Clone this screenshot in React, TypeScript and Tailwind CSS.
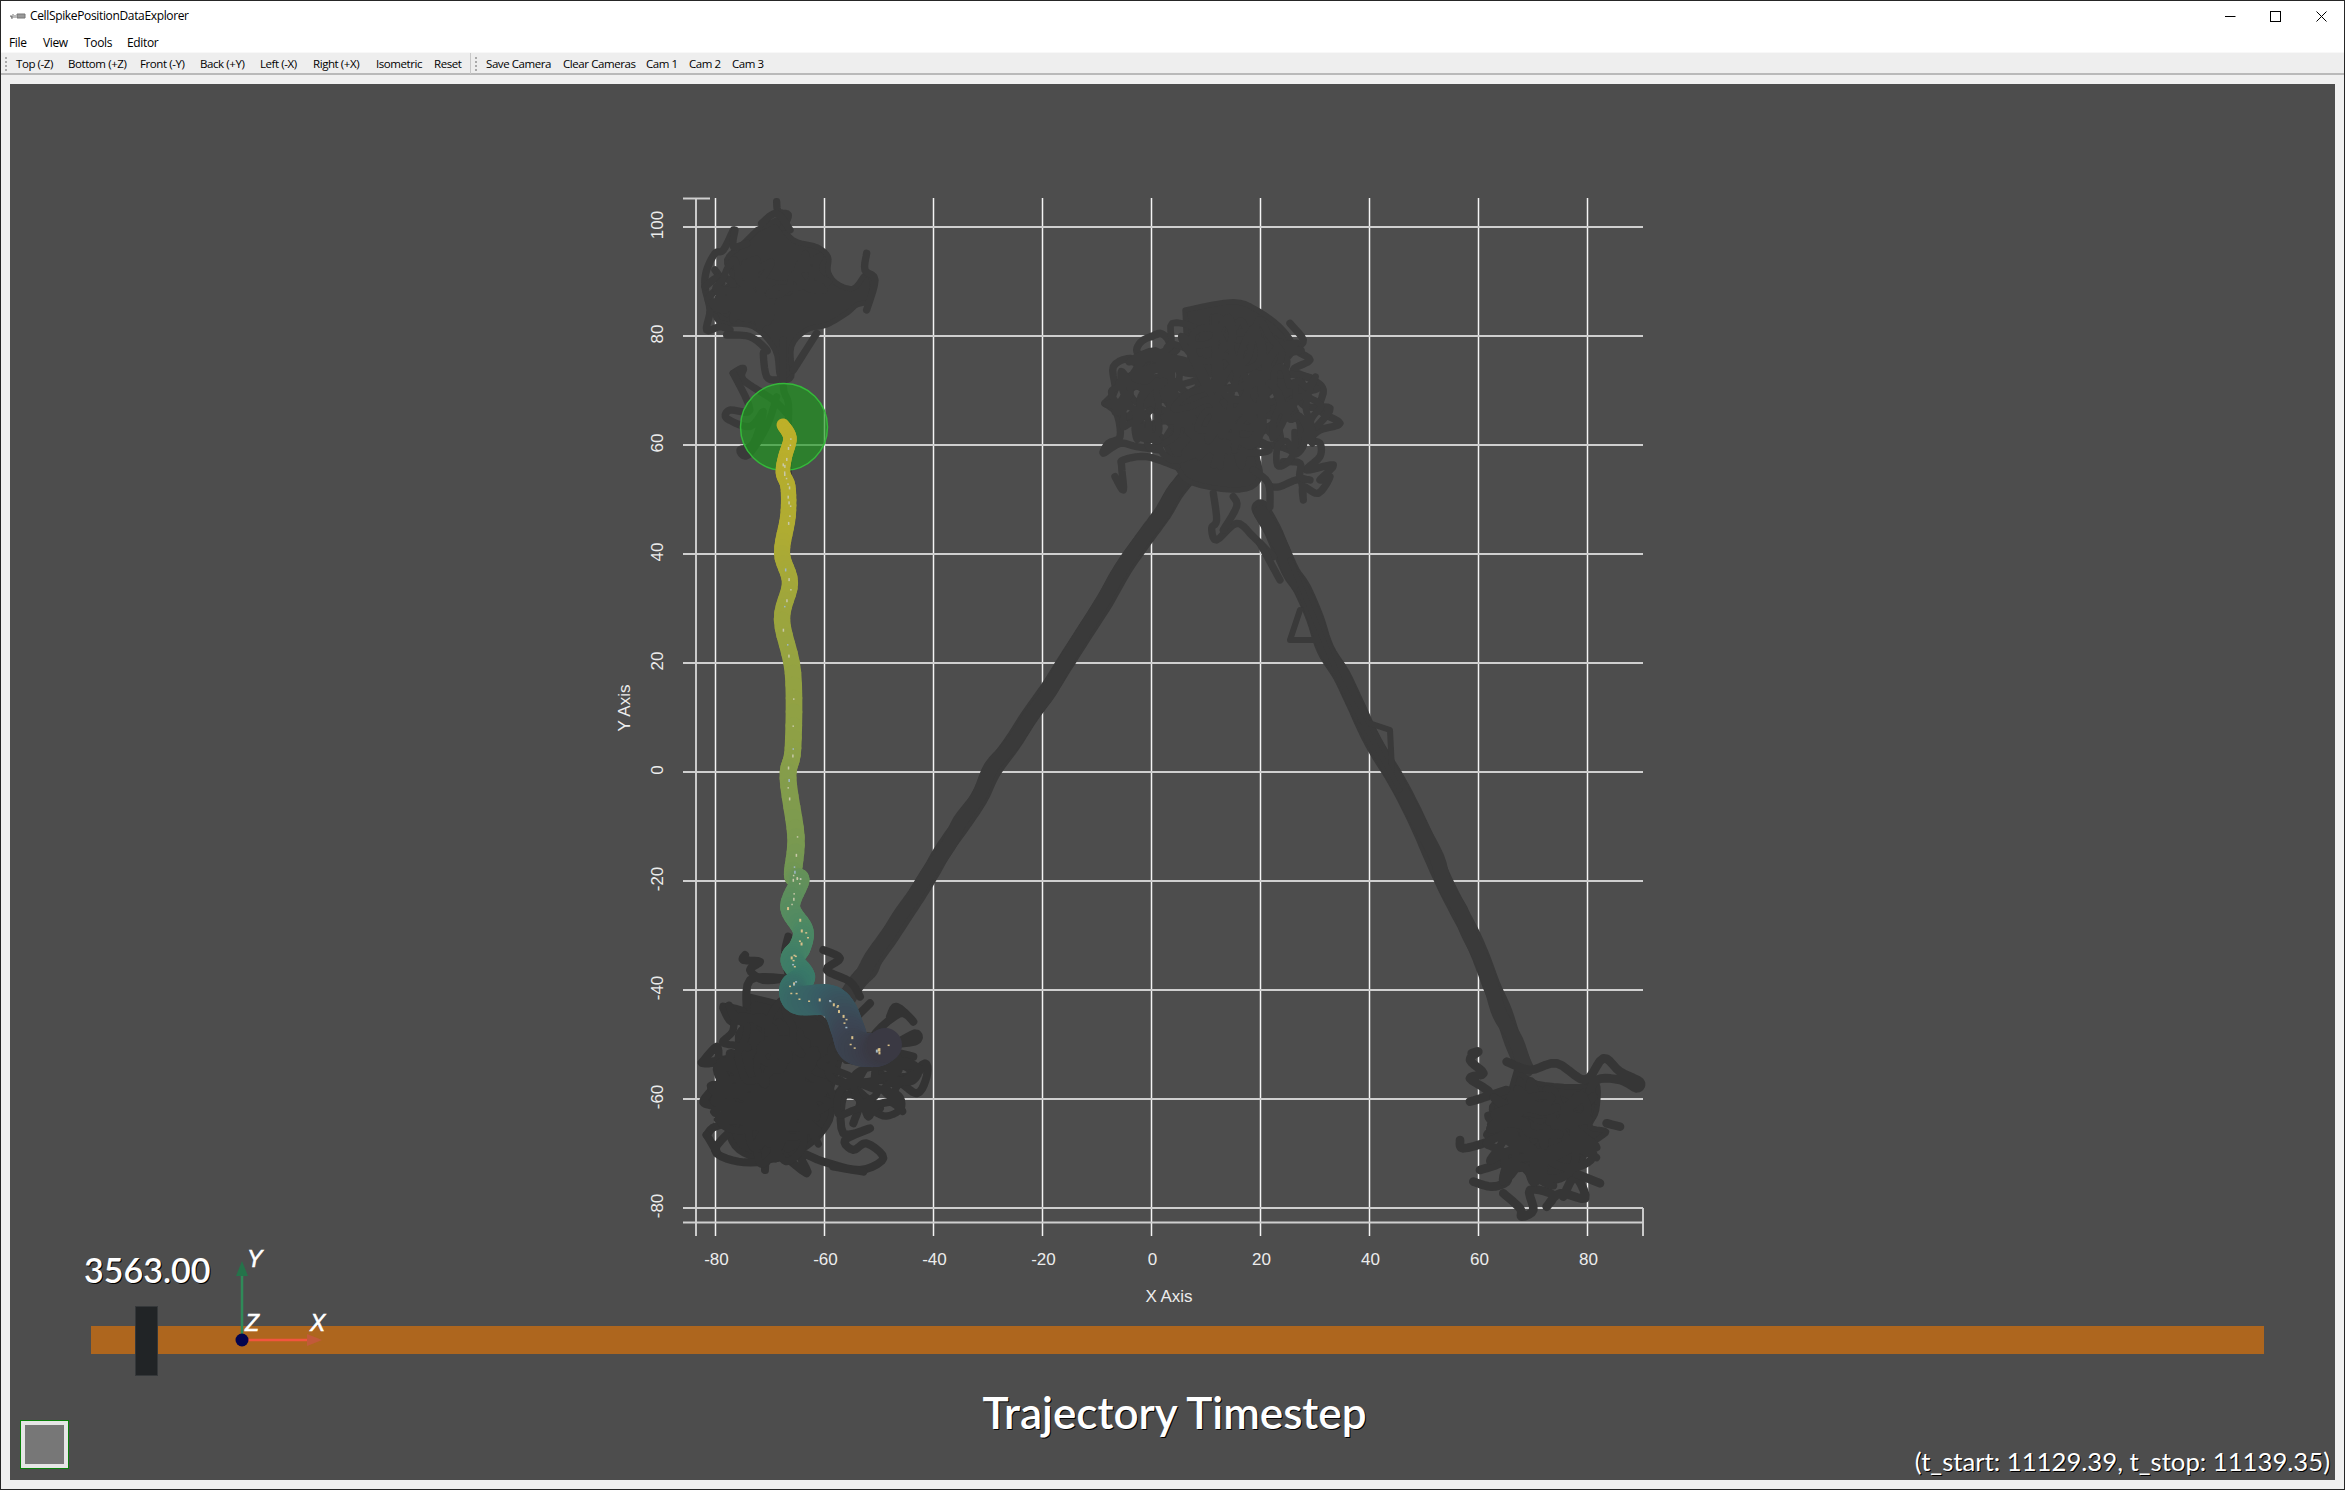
import React from "react";

type Pt = [number, number];

const ui = "font-['Open_Sans','Noto_Sans',sans-serif]";

const rng = (seed: number) => () => {
  seed = (seed + 0x6d2b79f5) | 0;
  let t = Math.imul(seed ^ (seed >>> 15), 1 | seed);
  t = (t + Math.imul(t ^ (t >>> 7), 61 | t)) ^ t;
  return ((t ^ (t >>> 14)) >>> 0) / 4294967296;
};

// catmull-rom resample so the tracks don't look like straight sticks
const smooth = (p: Pt[], n = 5): Pt[] => {
  const out: Pt[] = [];
  for (let i = 0; i < p.length - 1; i++) {
    const a = p[Math.max(i - 1, 0)];
    const b = p[i];
    const c = p[i + 1];
    const d = p[Math.min(i + 2, p.length - 1)];
    for (let j = 0; j < n; j++) {
      const t = j / n;
      const f = (k: 0 | 1) =>
        0.5 * (2 * b[k] + (c[k] - a[k]) * t + (2 * a[k] - 5 * b[k] + 4 * c[k] - d[k]) * t * t + (3 * b[k] - a[k] - 3 * c[k] + d[k]) * t * t * t);
      out.push([f(0), f(1)]);
    }
  }
  out.push(p[p.length - 1]);
  return out;
};

const line = (p: Pt[]) => p.map((q, i) => `${i ? "L" : "M"}${q[0].toFixed(1)} ${q[1].toFixed(1)}`).join("");
const curve = (p: Pt[]) => line(smooth(p));

// random walk held inside an ellipse, in the zoom coords of each blob
const scribble = (seed: number, cx: number, cy: number, rx: number, ry: number, n: number): Pt[] => {
  const r = rng(seed);
  const out: Pt[] = [];
  let x = cx;
  let y = cy;
  let a = r() * 6.28;
  for (let i = 0; i < n; i++) {
    a += (r() - 0.5) * 2.6;
    let nx = x + Math.cos(a) * rx * 0.3;
    let ny = y + Math.sin(a) * ry * 0.3;
    if (((nx - cx) / rx) ** 2 + ((ny - cy) / ry) ** 2 > 1) {
      a = Math.atan2(cy - y, cx - x) + (r() - 0.5) * 1.4;
      nx = x + Math.cos(a) * rx * 0.3;
      ny = y + Math.sin(a) * ry * 0.3;
    }
    x = nx;
    y = ny;
    out.push([x, y]);
  }
  return out;
};

const jitter = (p: Pt[], seed: number, amt: number, n = 4): Pt[] => {
  const r = rng(seed);
  const out: Pt[] = [];
  for (let i = 0; i < p.length - 1; i++) {
    for (let j = 0; j < n; j++) {
      const t = j / n;
      out.push([p[i][0] + (p[i + 1][0] - p[i][0]) * t + (r() - 0.5) * amt, p[i][1] + (p[i + 1][1] - p[i][1]) * t + (r() - 0.5) * amt]);
    }
  }
  out.push(p[p.length - 1]);
  return out;
};

const blobA = {
  core: [[470, 120], [520, 180], [590, 200], [625, 230], [625, 275], [650, 310], [700, 325], [735, 285], [755, 300], [750, 360], [710, 375], [680, 400], [620, 435], [560, 450], [515, 500], [515, 590], [480, 590], [465, 510], [400, 440], [310, 430], [285, 400], [300, 340], [340, 300], [320, 240], [370, 190], [410, 150]] as Pt[],
  loops: [
    [[470, 65], [475, 95], [505, 105], [490, 140]],
    [[425, 130], [470, 100], [510, 150]],
    [[740, 220], [735, 270], [765, 300], [740, 390]],
    [[340, 150], [310, 210], [285, 220], [260, 270], [255, 320], [270, 390], [260, 450], [300, 440], [330, 450]],
    [[345, 150], [340, 200], [380, 190]],
    [[285, 270], [305, 310], [265, 360], [320, 400]],
    [[255, 320], [300, 290], [340, 320], [290, 390]],
    [[320, 465], [390, 470], [440, 510], [430, 520], [440, 590], [470, 600]],
    [[520, 570], [590, 460]],
    [[340, 580], [370, 565], [370, 600], [460, 660], [500, 700]],
    [[340, 580], [390, 690], [330, 690], [320, 715], [390, 740], [430, 695], [400, 790], [360, 810], [385, 825], [440, 740], [470, 650]],
    [[490, 480], [490, 620], [505, 670], [505, 760], [505, 960]],
  ] as Pt[][],
};

const blobB = {
  core: [[270, 350], [420, 390], [500, 430], [540, 520], [510, 640], [510, 720], [440, 800], [330, 840], [235, 810], [200, 740], [190, 660], [195, 590], [240, 530], [250, 420]] as Pt[],
  loops: [
    [[255, 225], [250, 240], [300, 245], [270, 270], [310, 300], [370, 295], [270, 300], [260, 400]],
    [[190, 380], [250, 395], [215, 425], [190, 385]],
    [[125, 548], [170, 500], [170, 545], [125, 548], [220, 530], [260, 470]],
    [[155, 625], [150, 665], [185, 670], [190, 560]],
    [[140, 765], [165, 740], [230, 730], [165, 810], [235, 845], [320, 845]],
    [[140, 765], [170, 815]],
    [[315, 870], [330, 800], [440, 880], [420, 820], [490, 845], [600, 870], [670, 835], [620, 790], [580, 810], [555, 780], [630, 745], [550, 760], [550, 650], [600, 660], [580, 730]],
    [[520, 860], [610, 875]],
    [[490, 210], [540, 235], [500, 270], [570, 305], [600, 350]],
    [[385, 170], [375, 220], [385, 280]],
    [[630, 370], [590, 410]],
    [[540, 600], [660, 685], [590, 620], [700, 600], [770, 640], [800, 590], [795, 550], [740, 590], [660, 580], [690, 520], [760, 530], [650, 500], [765, 485], [765, 460], [690, 495], [640, 470], [720, 400], [760, 425], [710, 380], [690, 410]],
    [[620, 510], [760, 575], [700, 610]],
    [[520, 500], [640, 470], [660, 560]],
    [[480, 640], [495, 680], [550, 620]],
    [[160, 625], [130, 668], [190, 680]],
    [[540, 420], [590, 450], [620, 520], [560, 540]],
  ] as Pt[][],
};

const blobC = {
  core: [[290, 210], [350, 250], [480, 260], [530, 250], [530, 330], [510, 380], [560, 395], [520, 430], [470, 500], [420, 540], [350, 540], [300, 490], [290, 430], [240, 370], [215, 320], [270, 280]] as Pt[],
  loops: [
    [[155, 160], [175, 155], [150, 180], [190, 220], [150, 235], [210, 280], [150, 305], [260, 270]],
    [[260, 185], [330, 210], [410, 190], [495, 240], [550, 175], [600, 215], [660, 245], [650, 265], [600, 240], [530, 240], [500, 300]],
    [[120, 420], [130, 445], [215, 420], [205, 400], [290, 380]],
    [[180, 510], [240, 490], [290, 455], [340, 420]],
    [[160, 545], [215, 560], [260, 545], [270, 510], [330, 500]],
    [[250, 580], [300, 625], [305, 650], [340, 630], [330, 570], [400, 585], [380, 620], [420, 580], [495, 595], [465, 530], [430, 590]],
    [[465, 520], [540, 550]],
    [[500, 440], [520, 470]],
    [[560, 370], [600, 380]],
    [[290, 300], [360, 360], [400, 300], [480, 320], [520, 290]],
    [[230, 300], [300, 360], [280, 430]],
  ] as Pt[][],
};

const blobD = {
  core: [[315, 90], [460, 65], [540, 95], [610, 150], [640, 210], [580, 250], [400, 250], [320, 200]] as Pt[],
  core2: [[320, 370], [420, 350], [530, 380], [520, 480], [540, 590], [480, 630], [340, 610], [290, 560], [250, 480]] as Pt[],
  loops: [
    [[215, 170], [240, 160], [265, 180], [275, 230], [240, 260], [190, 235], [170, 210], [190, 180], [240, 160]],
    [[75, 370], [105, 330], [100, 260], [150, 235], [180, 260], [240, 250], [290, 210]],
    [[75, 370], [110, 400], [120, 470], [85, 490], [70, 520], [120, 490], [170, 500], [240, 510]],
    [[105, 590], [130, 630], [125, 560], [130, 540], [200, 530], [290, 560]],
    [[130, 300], [160, 360], [210, 380], [260, 420], [300, 460]],
    [[135, 340], [200, 300], [240, 340], [280, 390]],
    [[130, 300], [200, 280], [230, 360], [170, 420], [120, 400]],
    [[170, 420], [240, 470]],
    [[630, 130], [670, 180], [650, 210], [690, 240], [640, 270], [700, 300], [730, 330], [720, 390], [780, 430], [720, 450], [690, 480], [720, 490], [720, 530], [680, 570], [760, 555], [720, 600], [750, 590], [715, 640], [670, 620], [670, 660], [660, 600], [600, 620], [570, 620]],
    [[620, 350], [660, 430], [650, 510], [600, 500], [520, 490]],
    [[640, 340], [680, 380], [750, 385], [710, 440]],
    [[600, 280], [700, 300], [620, 370], [580, 430], [520, 470]],
    [[610, 545], [660, 550], [660, 590], [690, 600]],
    [[400, 640], [410, 720], [395, 745], [410, 780], [470, 730], [520, 770], [580, 830]],
    [[460, 650], [470, 680], [430, 750]],
    [[540, 790], [600, 900]],
    [[520, 570], [565, 610], [570, 680]],
  ] as Pt[][],
};

const legLeft: Pt[] = [[1185, 480], [1144, 538], [1065, 665], [994, 770], [930, 875], [875, 957], [845, 1002]];
const legRight: Pt[] = [[1262, 510], [1301, 591], [1353, 703], [1436, 860], [1480, 957], [1525, 1069]];

const tracePts: Pt[] = [[783, 425], [790, 438], [785, 457], [783, 473], [788, 487], [788, 516], [782, 553], [790, 583], [782, 620], [793, 673], [793, 748], [788, 778], [796, 837], [793, 875], [800, 880], [790, 907], [803, 930], [800, 947], [792, 960], [803, 977], [793, 987], [798, 1000], [827, 1000], [840, 1010], [848, 1030], [855, 1047], [875, 1050], [885, 1045]];

const stops: [number, number[], number][] = [
  [0, [190, 176, 40], 13],
  [0.2, [176, 172, 50], 16],
  [0.42, [130, 156, 76], 17],
  [0.6, [76, 136, 100], 21],
  [0.72, [56, 120, 104], 25],
  [0.82, [56, 92, 100], 32],
  [0.9, [60, 70, 84], 34],
  [1, [58, 56, 66], 34],
];

const sample = (t: number) => {
  let i = 0;
  while (i < stops.length - 2 && t > stops[i + 1][0]) i++;
  const [a, c, w] = stops[i];
  const [b, d, x] = stops[i + 1];
  const k = (t - a) / (b - a);
  return {
    color: `rgb(${c.map((v, j) => Math.round(v + (d[j] - v) * k)).join(",")})`,
    width: w + (x - w) * k,
  };
};

const Trace = () => {
  const pts = smooth(tracePts, 6);
  const r = rng(11);
  const last = pts.length - 1;
  const segs = [];
  const specks = [];
  for (let i = 0; i < last; i++) {
    const t = i / last;
    const s = sample(t);
    segs.push(
      <line key={i} x1={pts[i][0]} y1={pts[i][1]} x2={pts[i + 1][0]} y2={pts[i + 1][1]} stroke={s.color} strokeWidth={s.width} strokeLinecap="round" />
    );
    if (r() < 0.5) {
      const lower = t > 0.55;
      specks.push(
        <rect
          key={`s${i}`}
          x={pts[i][0] + (r() - 0.5) * (lower ? 8 : 3)}
          y={pts[i][1] + (r() - 0.5) * 3}
          width={lower ? 2 : 1.5}
          height={r() > 0.5 ? 3 : 1.5}
          fill={r() > 0.8 ? "#9fb8c8" : lower ? "#d8c08a" : "#c8c8a8"}
        />
      );
    }
  }
  return (
    <g>
      {segs}
      {specks}
    </g>
  );
};

type BlobData = { core: Pt[]; core2?: Pt[]; loops: Pt[][] };

const Blob = ({ data, at, color, core, loops, tangles }: { data: BlobData; at: Pt; color: string; core: number; loops: number; tangles: Pt[][] }) => (
  <g transform={`translate(${at[0]} ${at[1]}) scale(0.3333)`} stroke={color} fill="none" strokeLinecap="round" strokeLinejoin="round">
    <path d={curve(data.core) + "Z"} fill={color} strokeWidth={core} />
    {data.core2 && <path d={curve(data.core2) + "Z"} fill={color} strokeWidth={core} />}
    {data.loops.map((p, i) => (
      <path key={i} d={curve(p)} strokeWidth={loops} />
    ))}
    {tangles.map((p, i) => (
      <path key={i} d={curve(p)} strokeWidth={loops - 2} />
    ))}
  </g>
);

const xVals = [-80, -60, -40, -20, 0, 20, 40, 60, 80];
const yVals = [100, 80, 60, 40, 20, 0, -20, -40, -60, -80];
const gx = (v: number) => 715.5 + (v + 80) * 5.45;
const gy = (v: number) => 445 - (v - 60) * 5.45;

const Plot = () => (
  <svg className="absolute inset-0 w-full h-full" viewBox="10 84 2325 1396">
    {/* grid */}
    <g stroke="#f4f4f4" strokeWidth="1.5">
      <line x1="696" y1="198" x2="696" y2="1236" />
      {xVals.map((v) => (
        <line key={v} x1={gx(v)} y1="198" x2={gx(v)} y2="1236" />
      ))}
      <line x1="1643" y1="1208" x2="1643" y2="1236" />
    </g>
    <g stroke="#cfcfcf" strokeWidth="2">
      <line x1="683" y1="198.5" x2="710" y2="198.5" />
      {yVals.map((v) => (
        <line key={v} x1="683" y1={gy(v)} x2="1643" y2={gy(v)} />
      ))}
      <line x1="683" y1="1222.5" x2="1643" y2="1222.5" />
    </g>
    <g fill="#ececec" fontSize="17" fontFamily="'Liberation Sans',sans-serif" textAnchor="middle">
      {xVals.map((v) => (
        <text key={v} x={gx(v) + 1} y="1265">{v}</text>
      ))}
      {yVals.map((v) => (
        <text key={v} transform={`translate(663 ${gy(v) - 2}) rotate(-90)`}>{v}</text>
      ))}
      <text x="1169" y="1302">X Axis</text>
      <text transform="translate(630 708) rotate(-90)">Y Axis</text>
    </g>
    {/* old position track */}
    <g fill="none" stroke="#3a3a3a" strokeLinecap="round" strokeLinejoin="round">
      <path d={curve(jitter(legLeft, 21, 4))} strokeWidth="18" />
      <path d={curve(jitter(legLeft, 22, 6))} strokeWidth="15" />
      <path d={curve(jitter(legRight, 23, 4))} strokeWidth="18" />
      <path d={curve(jitter(legRight, 24, 6))} strokeWidth="15" />
      <path d="M1300 590L1318 640L1290 640L1300 610" strokeWidth="6" />
      <path d="M1360 720L1390 730L1392 770" strokeWidth="6" />
      <path d="M1290 560L1340 680L1400 790" strokeWidth="5" />
    </g>
    <Blob
      data={blobA}
      at={[620, 180]}
      color="#3a3a3a"
      core={16}
      loops={22}
      tangles={[scribble(3, 390, 340, 130, 110, 110), scribble(31, 520, 300, 110, 110, 30)]}
    />
    <Blob
      data={blobB}
      at={[660, 880]}
      color="#333333"
      core={18}
      loops={24}
      tangles={[scribble(5, 340, 640, 190, 220, 220), scribble(51, 610, 600, 180, 130, 70), scribble(52, 300, 480, 130, 150, 50)]}
    />
    <Blob
      data={blobC}
      at={[1420, 1000]}
      color="#363636"
      core={16}
      loops={26}
      tangles={[scribble(7, 360, 410, 190, 175, 100), scribble(71, 330, 360, 140, 100, 40)]}
    />
    <Blob
      data={blobD}
      at={[1080, 280]}
      color="#3b3b3b"
      core={16}
      loops={22}
      tangles={[scribble(9, 420, 340, 300, 240, 220), scribble(91, 440, 300, 180, 220, 110), scribble(92, 180, 370, 100, 140, 50), scribble(93, 640, 400, 95, 190, 40)]}
    />
    {/* current position marker */}
    <circle cx="784" cy="427" r="43.5" fill="#1f981f" fillOpacity="0.68" stroke="#35b83a" strokeWidth="1.5" />
    <Trace />
  </svg>
);

const AxesWidget = () => (
  <svg className="absolute inset-0 w-full h-full" viewBox="10 84 2325 1396">
    <line x1="242" y1="1340" x2="242" y2="1272" stroke="#2f8a58" strokeWidth="2.5" />
    <path d="M242 1261L236 1276L248 1276Z" fill="#25734a" />
    <line x1="242" y1="1340" x2="310" y2="1340" stroke="#f2553e" strokeWidth="2.5" />
    <path d="M322 1340L307 1334L307 1346Z" fill="#c25a3a" />
    <circle cx="242" cy="1340" r="6.5" fill="#04044e" />
    <g fill="#ffffff" stroke="#ffffff" strokeWidth="0.6" fontSize="23" fontStyle="italic" fontFamily="'Liberation Sans',sans-serif">
      <text x="247" y="1267">Y</text>
      <text x="245" y="1331">Z</text>
      <text x="310" y="1331">X</text>
    </g>
  </svg>
);

const label = "font-['Lato','Noto_Sans',sans-serif] text-white whitespace-nowrap [text-shadow:1px_1px_0_#000]";

export default function App() {
  return (
    <div className={`${ui} flex flex-col w-[2345px] h-[1490px] bg-[#f0f0f0] border border-[#262626] overflow-hidden text-[12px] text-black`}>
      <header className="h-[30px] shrink-0 bg-white flex items-center relative">
        <svg className="ml-[9px] w-[16px] h-[8px]" viewBox="0 0 16 8">
          <path d="M0 4h2v3M3 2v4M5 3v3M7 2h8v4H7z" stroke="#777" strokeWidth="1" fill="#999" />
        </svg>
        <span className="ml-[4px] leading-none tracking-[-0.35px]">CellSpikePositionDataExplorer</span>
        <div className="ml-auto flex items-center">
          <svg className="w-[11px] h-[11px] mr-[34px]" viewBox="0 0 11 11"><path d="M0 5.5h10.5" stroke="#000" /></svg>
          <svg className="w-[11px] h-[11px] mr-[35px]" viewBox="0 0 11 11"><rect x="0.5" y="0.5" width="10" height="10" fill="none" stroke="#000" /></svg>
          <svg className="w-[11px] h-[11px] mr-[17px]" viewBox="0 0 11 11"><path d="M0.5 0.5l10 10M10.5 0.5l-10 10" stroke="#000" /></svg>
        </div>
      </header>
      <nav className="h-[21px] shrink-0 bg-white flex items-center pl-[8px] pt-[2px] tracking-[-0.35px]">
        <span className="w-[34px]">File</span>
        <span className="w-[41px]">View</span>
        <span className="w-[43px]">Tools</span>
        <span>Editor</span>
      </nav>
      <div className="h-[23px] shrink-0 bg-[#eeeeee] border-t border-[#f8f8f8] border-b-2 border-b-[#b9b9b9] flex items-center pt-[2px] text-[11.5px] tracking-[-0.42px] whitespace-nowrap">
        <span className="ml-[4px] w-[3px] h-[14px] border-l-2 border-dotted border-[#aaa]" />
        <div className="ml-[8px] flex items-center">
          <span className="w-[52px]">Top (-Z)</span>
          <span className="w-[72px]">Bottom (+Z)</span>
          <span className="w-[60px]">Front (-Y)</span>
          <span className="w-[60px]">Back (+Y)</span>
          <span className="w-[53px]">Left (-X)</span>
          <span className="w-[63px]">Right (+X)</span>
          <span className="w-[58px]">Isometric</span>
          <span className="w-[36px]">Reset</span>
        </div>
        <span className="w-px h-[21px] bg-[#c8c8c8] -mt-[2px]" />
        <span className="ml-[4px] w-[3px] h-[14px] border-l-2 border-dotted border-[#aaa]" />
        <div className="ml-[8px] flex items-center">
          <span className="w-[77px]">Save Camera</span>
          <span className="w-[83px]">Clear Cameras</span>
          <span className="w-[43px]">Cam 1</span>
          <span className="w-[43px]">Cam 2</span>
          <span>Cam 3</span>
        </div>
      </div>
      <main className="flex-1 min-h-0 pt-[9px] pb-[9px] pl-[9px] pr-[9px]">
        <div className="relative w-full h-full bg-[#4d4d4d]">
          <Plot />
          <div className="absolute left-[81px] right-[71px] top-[1242px] h-[28px] bg-[#ae661e]" />
          <div className="absolute left-[125px] top-[1222px] w-[23px] h-[70px] bg-[#212426] border border-[#35383a]" />
          <AxesWidget />
          <div className={`${label} absolute left-[74px] top-[1164px] text-[34px] leading-[44px] font-semibold`}>3563.00</div>
          <div className={`${label} absolute left-0 right-0 top-[1302px] pl-[4px] text-center text-[44px] leading-[52px] font-semibold`}>Trajectory Timestep</div>
          <div className={`${label} absolute right-[5px] top-[1359px] text-[25.7px] leading-[36px] font-normal`}>(t_start: 11129.39, t_stop: 11139.35)</div>
          <div className="absolute left-[10px] top-[1336px] w-[49px] h-[49px] border border-[#0a800a] bg-[#e6e6e6] p-[4px]">
            <div className="w-full h-full bg-[#777777]" />
          </div>
        </div>
      </main>
    </div>
  );
}
